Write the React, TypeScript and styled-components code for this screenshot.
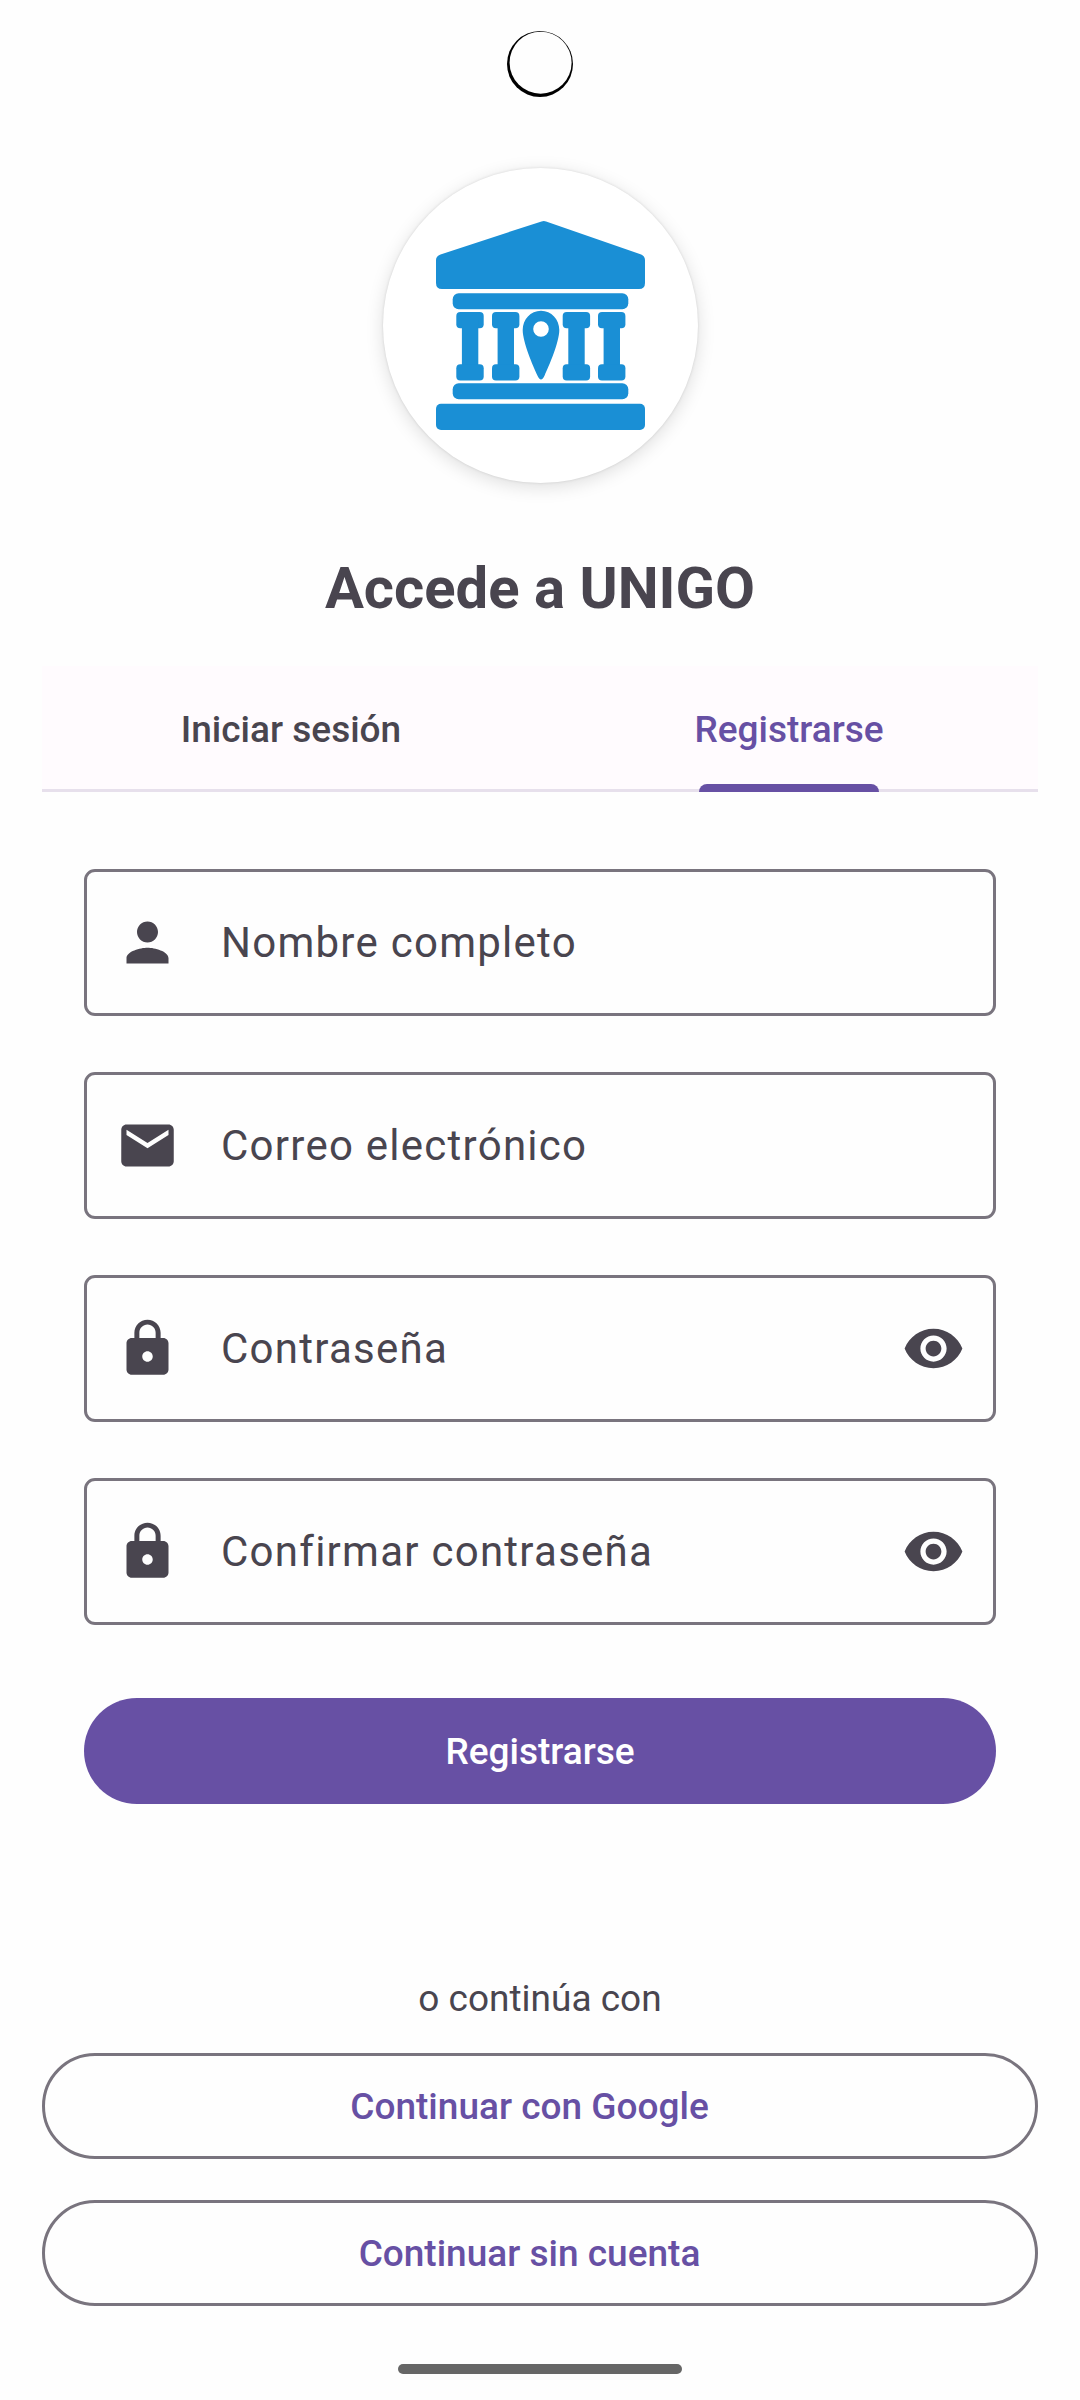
import { useState } from "react";
import type { FormEvent, ReactNode } from "react";
import styled, { createGlobalStyle } from "styled-components";

const color = {
  page: "#fefefe",
  surface: "#fffbfe",
  primary: "#6750a4",
  onPrimary: "#ffffff",
  text: "#49454f",
  outline: "#79747e",
  divider: "#e7e0ec",
  brand: "#1a8fd5",
};

const GlobalStyle = createGlobalStyle`
  *, *::before, *::after { box-sizing: border-box; }
  body {
    margin: 0;
    background: ${color.page};
    color: ${color.text};
    font-family: Roboto, "Noto Sans", sans-serif;
  }
  button, input { font: inherit; }
`;

const Page = styled.main`
  display: flex;
  flex-direction: column;
  min-height: 100vh;
  padding: 31px 42px 26px;
`;

const CameraRing = styled.svg`
  display: block;
  align-self: center;
  width: 66px;
  height: 66px;
`;

const LogoDisc = styled.div`
  display: grid;
  place-items: center;
  align-self: center;
  width: 315px;
  height: 315px;
  margin-top: 71px;
  border-radius: 50%;
  background: #ffffff;
  box-shadow: 0 0 3px rgba(0, 0, 0, 0.12), 0 4px 18px rgba(0, 0, 0, 0.13);
`;

const Title = styled.h1`
  margin: 71px 0 44px;
  font-size: 58px;
  font-weight: 700;
  line-height: 68px;
  text-align: center;
`;

const TabBar = styled.div`
  display: grid;
  grid-template-columns: 1fr 1fr;
  height: 126px;
  background: ${color.surface};
  box-shadow: inset 0 -3px ${color.divider};
`;

const Tab = styled.button<{ $active: boolean }>`
  position: relative;
  padding: 2px 0 0;
  border: 0;
  background: transparent;
  color: ${({ $active }) => ($active ? color.primary : color.text)};
  font-size: 37px;
  font-weight: 500;
  line-height: 48px;
  cursor: pointer;

  &::after {
    content: "";
    display: ${({ $active }) => ($active ? "block" : "none")};
    position: absolute;
    bottom: 0;
    left: calc(50% - 90px);
    width: 180px;
    height: 8px;
    border-radius: 8px 8px 0 0;
    background: ${color.primary};
  }
`;

const Form = styled.form`
  display: flex;
  flex-direction: column;
  gap: 56px;
  padding: 77px 42px 0;
`;

const FieldBox = styled.div`
  display: flex;
  align-items: center;
  gap: 42px;
  height: 147px;
  padding: 0 28px 0 29px;
  border: 3px solid ${color.outline};
  border-radius: 11px;
`;

const Entry = styled.div`
  position: relative;
  flex: 1;
  min-width: 0;
  height: 100%;
  font-size: 42px;
  letter-spacing: 0.03em;
`;

/* The label rests over the empty input and leaves once something is typed. */
const Label = styled.label`
  position: absolute;
  inset: 0;
  display: flex;
  align-items: center;
  white-space: nowrap;
  pointer-events: none;
`;

const Input = styled.input`
  display: block;
  width: 100%;
  height: 100%;
  padding: 0;
  border: 0;
  outline: 0;
  background: transparent;
  color: ${color.text};
  letter-spacing: inherit;

  &:not(:placeholder-shown) + ${Label} {
    visibility: hidden;
  }
`;

const Icon = styled.svg`
  display: block;
  flex: none;
  width: 63px;
  height: 63px;
  fill: ${color.text};
`;

const IconButton = styled.button`
  flex: none;
  padding: 0;
  border: 0;
  background: transparent;
  cursor: pointer;
`;

const PillButton = styled.button`
  height: 106px;
  padding: 2px 63px 0;
  border: 0;
  border-radius: 53px;
  background: ${color.primary};
  color: ${color.onPrimary};
  font-size: 37px;
  font-weight: 500;
  line-height: 48px;
  cursor: pointer;
`;

const SubmitButton = styled(PillButton)`
  margin-top: 17px;
`;

const OutlinedButton = styled(PillButton)`
  padding: 2px 63px 0 42px;
  border: 3px solid ${color.outline};
  background: transparent;
  color: ${color.primary};
`;

const Alternatives = styled.section`
  display: flex;
  flex-direction: column;
  gap: 41px;
  margin-top: auto;
  padding-top: 42px;
`;

const Hint = styled.p`
  margin: 0 0 -11px;
  font-size: 37px;
  line-height: 48px;
  text-align: center;
`;

const HomeHandle = styled.div`
  align-self: center;
  width: 284px;
  height: 10px;
  margin-top: 58px;
  border-radius: 5px;
  background: #666666;
`;

const PATHS = {
  person:
    "M12 12c2.21 0 4-1.79 4-4s-1.79-4-4-4-4 1.79-4 4 1.79 4 4 4zm0 2c-2.67 0-8 1.34-8 4v2h16v-2c0-2.66-5.33-4-8-4z",
  mail:
    "M20 4H4c-1.1 0-1.99.9-1.99 2L2 18c0 1.1.9 2 2 2h16c1.1 0 2-.9 2-2V6c0-1.1-.9-2-2-2zm0 4l-8 5-8-5V6l8 5 8-5v2z",
  lock:
    "M18 8h-1V6c0-2.76-2.24-5-5-5S7 3.24 7 6v2H6c-1.1 0-2 .9-2 2v10c0 1.1.9 2 2 2h12c1.1 0 2-.9 2-2V10c0-1.1-.9-2-2-2zm-6 9c-1.1 0-2-.9-2-2s.9-2 2-2 2 .9 2 2-.9 2-2 2zm3.1-9H8.9V6c0-1.71 1.39-3.1 3.1-3.1 1.71 0 3.1 1.39 3.1 3.1v2z",
  eye:
    "M12 4.5C7 4.5 2.73 7.61 1 12c1.73 4.39 6 7.5 11 7.5s9.27-3.11 11-7.5c-1.73-4.39-6-7.5-11-7.5zM12 17c-2.76 0-5-2.24-5-5s2.24-5 5-5 5 2.24 5 5-2.24 5-5 5zm0-8c-1.66 0-3 1.34-3 3s1.34 3 3 3 3-1.34 3-3-1.34-3-3-3z",
};

type IconName = keyof typeof PATHS;

function Glyph({ name }: { name: IconName }) {
  return (
    <Icon viewBox="0 0 24 24" aria-hidden="true">
      <path d={PATHS[name]} />
    </Icon>
  );
}

function Column({ x }: { x: number }) {
  return (
    <g transform={`translate(${x} 91)`}>
      <rect width="27.4" height="16.3" rx="4" />
      <rect x="5.6" y="8" width="16.4" height="52" />
      <rect y="52.2" width="27.4" height="16.3" rx="4" />
    </g>
  );
}

function UnigoLogo() {
  return (
    <svg width="209" height="209" viewBox="0 0 209 209" fill={color.brand} role="img" aria-label="UNIGO">
      <path d="M105.5 0.4Q107.8 -0.4 110.1 0.4L204.5 33.2Q209 35 209 39V62Q209 68 203 68H6Q0 68 0 62V39Q0 35 4.5 33.4Z" />
      <rect x="16.7" y="72.3" width="175.6" height="16" rx="6" />
      <Column x={20.3} />
      <Column x={56} />
      <path
        fillRule="evenodd"
        d="M105 89.7C94.6 89.7 86.7 98.4 86.7 109C86.7 121 97 145 101.4 154.5Q103.2 158.4 105 158.4Q106.8 158.4 108.6 154.5C113 145 123.3 121 123.3 109C123.3 98.4 115.4 89.7 105 89.7ZM105 100.2A7.8 7.8 0 1 1 105 115.8A7.8 7.8 0 1 1 105 100.2Z"
      />
      <Column x={126.7} />
      <Column x={162} />
      <rect x="16.7" y="162.3" width="175.6" height="16" rx="6" />
      <rect y="182.7" width="209" height="26.3" rx="5" />
    </svg>
  );
}

interface FieldProps {
  id: string;
  label: string;
  icon: IconName;
  type: string;
  trailing?: ReactNode;
}

function Field({ id, label, icon, type, trailing }: FieldProps) {
  return (
    <FieldBox>
      <Glyph name={icon} />
      <Entry>
        <Input id={id} type={type} placeholder=" " />
        <Label htmlFor={id}>{label}</Label>
      </Entry>
      {trailing}
    </FieldBox>
  );
}

function PasswordField({ id, label }: { id: string; label: string }) {
  const [visible, setVisible] = useState(false);
  return (
    <Field
      id={id}
      label={label}
      icon="lock"
      type={visible ? "text" : "password"}
      trailing={
        <IconButton type="button" aria-label="Mostrar contraseña" aria-pressed={visible} onClick={() => setVisible(!visible)}>
          <Glyph name="eye" />
        </IconButton>
      }
    />
  );
}

export default function App() {
  const [registering, setRegistering] = useState(true);
  const submit = (event: FormEvent) => event.preventDefault();

  return (
    <>
      <GlobalStyle />
      <Page>
        <CameraRing viewBox="0 0 66 66" aria-hidden="true">
          <circle cx="33" cy="33" r="33" fill="#000000" />
          <circle cx="33.6" cy="31.7" r="31" fill={color.page} />
        </CameraRing>
        <LogoDisc>
          <UnigoLogo />
        </LogoDisc>
        <Title>Accede a UNIGO</Title>
        <TabBar role="tablist">
          <Tab type="button" role="tab" aria-selected={!registering} $active={!registering} onClick={() => setRegistering(false)}>
            Iniciar sesión
          </Tab>
          <Tab type="button" role="tab" aria-selected={registering} $active={registering} onClick={() => setRegistering(true)}>
            Registrarse
          </Tab>
        </TabBar>
        <Form onSubmit={submit}>
          {registering && <Field id="name" label="Nombre completo" icon="person" type="text" />}
          <Field id="email" label="Correo electrónico" icon="mail" type="email" />
          <PasswordField id="password" label="Contraseña" />
          {registering && <PasswordField id="confirm" label="Confirmar contraseña" />}
          <SubmitButton type="submit">{registering ? "Registrarse" : "Iniciar sesión"}</SubmitButton>
        </Form>
        <Alternatives>
          <Hint>o continúa con</Hint>
          <OutlinedButton type="button">Continuar con Google</OutlinedButton>
          <OutlinedButton type="button">Continuar sin cuenta</OutlinedButton>
        </Alternatives>
        <HomeHandle />
      </Page>
    </>
  );
}
